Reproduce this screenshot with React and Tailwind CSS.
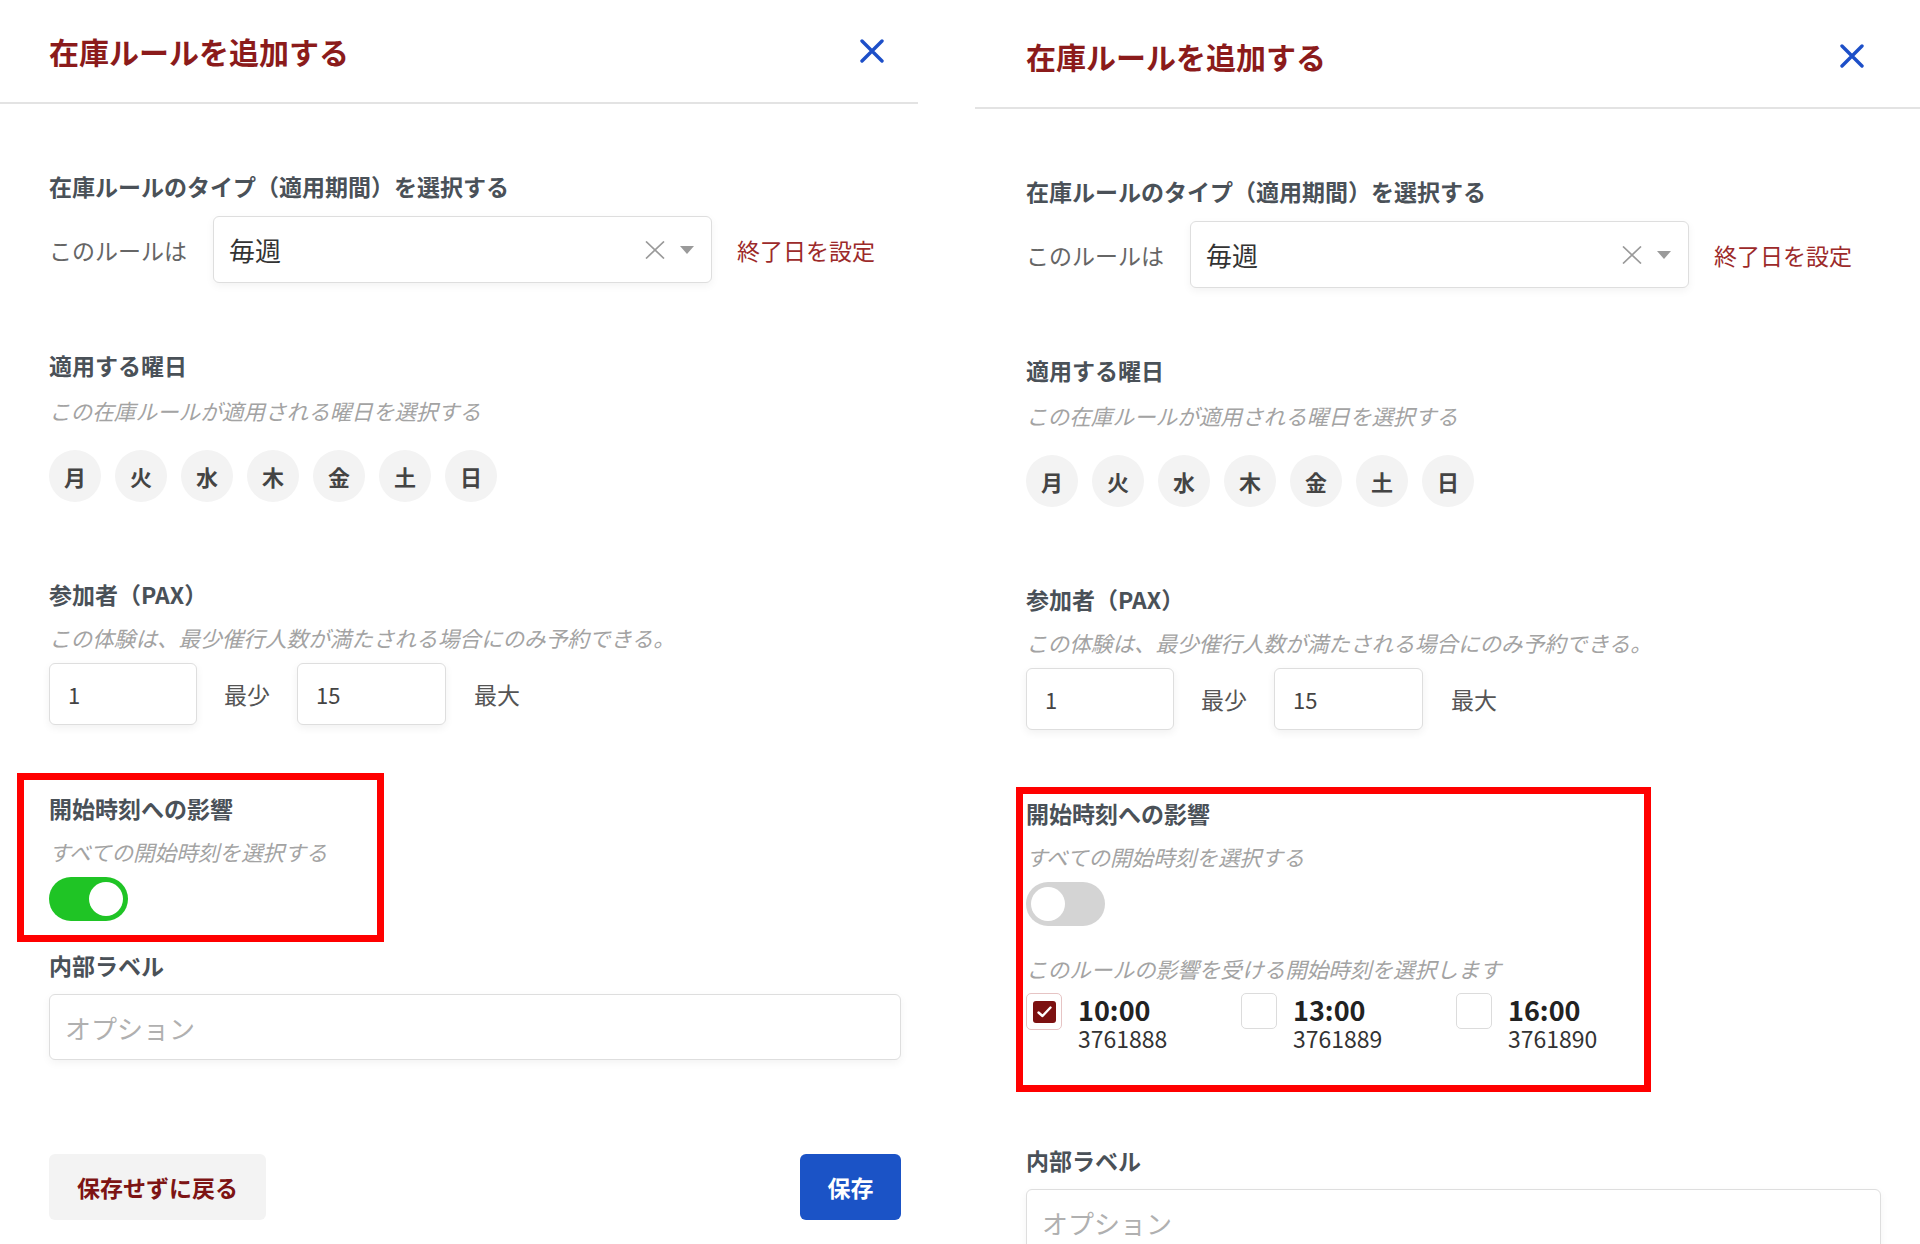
import React from 'react';

const CloseIcon = () => (
    <svg width="24" height="24" viewBox="0 0 24 24" fill="none">
        <path d="M2 2L22 22M22 2L2 22" stroke="#1d4fc8" strokeWidth="3.4" strokeLinecap="round" />
    </svg>
);

const ClearIcon = () => (
    <svg width="20" height="18" viewBox="0 0 20 18" fill="none">
        <path d="M1 0.5L19 17.5M19 0.5L1 17.5" stroke="#9a9a9a" strokeWidth="1.7" />
    </svg>
);

const CaretIcon = () => (
    <svg width="14" height="8" viewBox="0 0 14 8" fill="#9a9a9a">
        <path d="M0 0H14L7 8Z" />
    </svg>
);

const CheckIcon = () => (
    <svg width="15" height="12" viewBox="0 0 15 12" fill="none">
        <path d="M1.5 6.5L5.5 10L13.5 1.5" stroke="#fff" strokeWidth="2.4" strokeLinecap="round" strokeLinejoin="round" />
    </svg>
);

const days = ['月', '火', '水', '木', '金', '土', '日'];

const startTimes = [
    { time: '10:00', id: '3761888', checked: true },
    { time: '13:00', id: '3761889', checked: false },
    { time: '16:00', id: '3761890', checked: false },
];

const SectionTitle = ({ children, className = '' }) => (
    <h3 className={`text-[23px] leading-[32px] font-bold text-[#4a5158] ${className}`}>{children}</h3>
);

const Hint = ({ children, className = '' }) => (
    <p className={`text-[21.6px] leading-[30px] italic text-[#a3a3a3] ${className}`}>{children}</p>
);

const TextBox = ({ value, className = '' }) => (
    <div className={`h-[62px] rounded-[6px] border border-[#dedede] bg-white shadow-[0_3px_8px_rgba(0,0,0,0.06)] flex items-center px-[18px] text-[22px] text-[#444] ${className}`}>
        {value}
    </div>
);

const Toggle = ({ on }) => (
    <div className={`w-[79px] h-[44px] rounded-full flex items-center px-[5px] ${on ? 'bg-[#1fc425] justify-end' : 'bg-[#d4d4d4] justify-start'}`}>
        <div className="w-[34px] h-[34px] rounded-full bg-white" />
    </div>
);

const TimeOption = ({ time, id, checked }) => (
    <div className="w-[215px] flex items-start gap-[16px]">
        {checked ? (
            <div className="w-[36px] h-[37px] rounded-[5px] border border-[#e6c4c4] flex items-center justify-center">
                <div className="w-[23px] h-[22px] rounded-[3px] bg-[#7c1111] flex items-center justify-center">
                    <CheckIcon />
                </div>
            </div>
        ) : (
            <div className="w-[36px] h-[36px] rounded-[5px] border border-[#dcdcdc] bg-white" />
        )}
        <div className="pt-[2px]">
            <div className="text-[27px] leading-[29px] font-bold text-[#222]">{time}</div>
            <div className="text-[23px] leading-[29px] text-[#333]">{id}</div>
        </div>
    </div>
);

const Panel = ({ allTimes, className = '', headerPad = '', bodyPad = '' }) => (
    <div className={className}>
        <div className={`h-[104px] border-b-2 border-[#e3e3e3] flex items-center justify-between ${headerPad}`}>
            <h2 className="text-[30px] leading-[40px] font-bold text-[#8b1b1b]">在庫ルールを追加する</h2>
            <button type="button" className="flex items-center">
                <CloseIcon />
            </button>
        </div>

        <div className={bodyPad}>
            <SectionTitle className="mt-[66px]">在庫ルールのタイプ（適用期間）を選択する</SectionTitle>
            <div className="mt-[14px] flex items-center">
                <span className="text-[23px] leading-[32px] text-[#666]">このルールは</span>
                <div className="ml-[26px] w-[499px] h-[67px] rounded-[6px] border border-[#dedede] bg-white shadow-[0_3px_8px_rgba(0,0,0,0.05)] flex items-center pl-[15px] pr-[17px]">
                    <span className="flex-1 text-[26px] text-[#333]">毎週</span>
                    <ClearIcon />
                    <span className="ml-[15px]"><CaretIcon /></span>
                </div>
                <span className="ml-[25px] text-[23px] leading-[32px] text-[#9c2a2a]">終了日を設定</span>
            </div>

            <SectionTitle className="mt-[66px]">適用する曜日</SectionTitle>
            <Hint className="mt-[15px]">この在庫ルールが適用される曜日を選択する</Hint>
            <div className="mt-[24px] flex gap-[14px]">
                {days.map((d) => (
                    <div key={d} className="w-[52px] h-[52px] rounded-full bg-[#f3f3f3] flex items-center justify-center text-[22px] font-bold text-[#444]">
                        {d}
                    </div>
                ))}
            </div>

            <SectionTitle className="mt-[76px]">参加者（PAX）</SectionTitle>
            <Hint className="mt-[13px]">この体験は、最少催行人数が満たされる場合にのみ予約できる。</Hint>
            <div className="mt-[10px] flex items-center">
                <TextBox value="1" className="w-[148px]" />
                <span className="ml-[27px] text-[23px] text-[#555]">最少</span>
                <TextBox value="15" className="ml-[27px] w-[149px]" />
                <span className="ml-[28px] text-[23px] text-[#555]">最大</span>
            </div>

            <SectionTitle className="mt-[67px]">開始時刻への影響</SectionTitle>
            <Hint className="mt-[13px]">すべての開始時刻を選択する</Hint>
            <div className="mt-[10px]">
                <Toggle on={allTimes} />
            </div>

            {!allTimes && (
                <>
                    <Hint className="mt-[28px]">このルールの影響を受ける開始時刻を選択します</Hint>
                    <div className="mt-[9px] flex">
                        {startTimes.map((t) => (
                            <TimeOption key={t.id} {...t} />
                        ))}
                    </div>
                </>
            )}

            <SectionTitle className={allTimes ? 'mt-[28px]' : 'mt-[91px]'}>内部ラベル</SectionTitle>
            <div className="mt-[13px] h-[66px] rounded-[6px] border border-[#dedede] bg-white shadow-[0_3px_8px_rgba(0,0,0,0.05)] flex items-center px-[15px] text-[26px] text-[#b0b0b0]">
                オプション
            </div>

            {allTimes && (
                <div className="mt-[94px] flex justify-between">
                    <button type="button" className="w-[217px] h-[66px] rounded-[6px] bg-[#f3f3f3] text-[23px] font-bold text-[#7d1414]">
                        保存せずに戻る
                    </button>
                    <button type="button" className="w-[101px] h-[66px] rounded-[6px] bg-[#1b53c6] text-[23px] font-bold text-white">
                        保存
                    </button>
                </div>
            )}
        </div>
    </div>
);

export default function App() {
    return (
        <div className="relative w-[1920px] h-[1244px] overflow-hidden bg-white flex font-['Noto_Sans_CJK_JP','Noto_Sans',sans-serif]">
            <Panel allTimes className="w-[918px] shrink-0" headerPad="pl-[49px] pr-[34px]" bodyPad="pl-[49px] pr-[17px]" />
            <Panel allTimes={false} className="ml-[57px] flex-1 pt-[5px]" headerPad="pl-[51px] pr-[56px]" bodyPad="pl-[51px] pr-[39px]" />

            {/* annotation frames */}
            <div className="absolute left-[17px] top-[773px] w-[367px] h-[169px] border-[7px] border-[#ff0000]" />
            <div className="absolute left-[1016px] top-[787px] w-[635px] h-[305px] border-[7px] border-[#ff0000]" />
        </div>
    );
}
